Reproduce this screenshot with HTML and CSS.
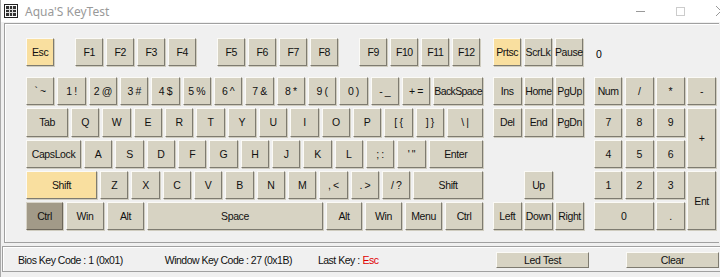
FILE: index.html
```html
<!DOCTYPE html>
<html lang="en">
<head>
    <title>Aqua'S KeyTest</title>
    <link rel="stylesheet" href="styles.css">
</head>
<body>
    <div class="window">
        <div class="titlebar">
            <svg class="app-icon" width="14" height="14" viewBox="0 0 14 14">
                <rect x="0.5" y="0.5" width="13" height="13" fill="#fff" stroke="#222"/>
                <rect x="2" y="2" width="10" height="10" fill="#333"/>
                <path d="M2 5.5h10M2 8.5h10M5.5 2v10M8.5 2v10" stroke="#ddd" stroke-width="1"/>
            </svg>
            <span class="title">Aqua'S KeyTest</span>
            <div class="controls">
                <span class="ctl-min"></span>
                <span class="ctl-max"></span>
                <svg class="ctl-close" width="10" height="10" viewBox="0 0 10 10">
                    <path d="M0 0L10 10M10 0L0 10" stroke="#999" stroke-width="1"/>
                </svg>
            </div>
        </div>

        <div class="panel">
            <div class="top-row">
                <div class="main-top">
                    <div class="key esc on">Esc</div>
                    <div class="fgroup">
                        <div class="key">F1</div>
                        <div class="key">F2</div>
                        <div class="key">F3</div>
                        <div class="key">F4</div>
                    </div>
                    <div class="fgroup">
                        <div class="key">F5</div>
                        <div class="key">F6</div>
                        <div class="key">F7</div>
                        <div class="key">F8</div>
                    </div>
                    <div class="fgroup">
                        <div class="key">F9</div>
                        <div class="key">F10</div>
                        <div class="key">F11</div>
                        <div class="key">F12</div>
                    </div>
                </div>
                <div class="nav-top">
                    <div class="key on">Prtsc</div>
                    <div class="key">ScrLk</div>
                    <div class="key">Pause</div>
                </div>
                <span class="led-code">0</span>
            </div>

            <div class="lower">
                <div class="main">
                    <div class="row">
                        <div class="key">` ~</div>
                        <div class="key">1 !</div>
                        <div class="key">2 @</div>
                        <div class="key">3 #</div>
                        <div class="key">4 $</div>
                        <div class="key">5 %</div>
                        <div class="key">6 ^</div>
                        <div class="key">7 &amp;</div>
                        <div class="key">8 *</div>
                        <div class="key">9 (</div>
                        <div class="key">0 )</div>
                        <div class="key">- _</div>
                        <div class="key">+ =</div>
                        <div class="key backspace">BackSpace</div>
                    </div>
                    <div class="row">
                        <div class="key tab">Tab</div>
                        <div class="key">Q</div>
                        <div class="key">W</div>
                        <div class="key">E</div>
                        <div class="key">R</div>
                        <div class="key">T</div>
                        <div class="key">Y</div>
                        <div class="key">U</div>
                        <div class="key">I</div>
                        <div class="key">O</div>
                        <div class="key">P</div>
                        <div class="key">[ {</div>
                        <div class="key">] }</div>
                        <div class="key backslash">\ |</div>
                    </div>
                    <div class="row">
                        <div class="key caps">CapsLock</div>
                        <div class="key">A</div>
                        <div class="key">S</div>
                        <div class="key">D</div>
                        <div class="key">F</div>
                        <div class="key">G</div>
                        <div class="key">H</div>
                        <div class="key">J</div>
                        <div class="key">K</div>
                        <div class="key">L</div>
                        <div class="key">; :</div>
                        <div class="key">' "</div>
                        <div class="key enter">Enter</div>
                    </div>
                    <div class="row">
                        <div class="key lshift on">Shift</div>
                        <div class="key">Z</div>
                        <div class="key">X</div>
                        <div class="key">C</div>
                        <div class="key">V</div>
                        <div class="key">B</div>
                        <div class="key">N</div>
                        <div class="key">M</div>
                        <div class="key">, &lt;</div>
                        <div class="key">. &gt;</div>
                        <div class="key">/ ?</div>
                        <div class="key rshift">Shift</div>
                    </div>
                    <div class="row">
                        <div class="key mod down">Ctrl</div>
                        <div class="key mod win">Win</div>
                        <div class="key mod">Alt</div>
                        <div class="key space">Space</div>
                        <div class="key mod ralt">Alt</div>
                        <div class="key mod">Win</div>
                        <div class="key mod">Menu</div>
                        <div class="key mod rctrl">Ctrl</div>
                    </div>
                </div>

                <div class="nav">
                    <div class="key">Ins</div>
                    <div class="key">Home</div>
                    <div class="key">PgUp</div>
                    <div class="key">Del</div>
                    <div class="key">End</div>
                    <div class="key">PgDn</div>
                    <div class="key up">Up</div>
                    <div class="key arrow-left">Left</div>
                    <div class="key arrow-down">Down</div>
                    <div class="key arrow-right">Right</div>
                </div>

                <div class="numpad">
                    <div class="key">Num</div>
                    <div class="key">/</div>
                    <div class="key">*</div>
                    <div class="key">-</div>
                    <div class="key">7</div>
                    <div class="key">8</div>
                    <div class="key">9</div>
                    <div class="key tall">+</div>
                    <div class="key">4</div>
                    <div class="key">5</div>
                    <div class="key">6</div>
                    <div class="key">1</div>
                    <div class="key">2</div>
                    <div class="key">3</div>
                    <div class="key tall">Ent</div>
                    <div class="key wide">0</div>
                    <div class="key">.</div>
                </div>
            </div>
        </div>

        <div class="status">
            <span class="bios">Bios Key Code : 1 (0x01)</span>
            <span class="wincode">Window Key Code : 27 (0x1B)</span>
            <span class="last">Last Key :</span>
            <span class="last-key">Esc</span>
            <button class="btn led">Led Test</button>
            <button class="btn clear">Clear</button>
        </div>
    </div>
</body>
</html>
```

FILE: styles.css
```css
body {
    margin: 0;
    background-color: #f0f0f0;
    font-family: "Liberation Sans", Arial, sans-serif;
    font-size: 10.5px;
    letter-spacing: -0.4px;
    color: #000;
}

.window {
    width: 720px;
    height: 277px;
    overflow: hidden;
    border-left: 1px solid #aaa;
    box-sizing: border-box;
}

.titlebar {
    height: 22px;
    background-color: #fff;
    display: flex;
    align-items: center;
    padding-left: 3px;
    letter-spacing: 0;
}

.app-icon {
    display: block;
}

.title {
    margin-left: 7px;
    font-family: "Noto Sans", sans-serif;
    font-size: 12px;
    color: #999;
}

.controls {
    margin-left: auto;
    display: flex;
    align-items: center;
}

.ctl-min {
    width: 9px;
    border-top: 1px solid #999;
    margin-right: 31px;
}

.ctl-max {
    width: 7px;
    height: 7px;
    border: 1px solid #ccc;
    margin-right: 31px;
}

.ctl-close {
    margin-right: -6px;
}

/* keyboard panel */
.panel {
    margin: 1px 1px 0 3px;
    border: 1px solid #a0a0a0;
    border-right: none;
    box-shadow: inset 1px 1px 0 #fff;
    padding: 14px 0 12px 21px;
}

.top-row {
    display: flex;
    align-items: center;
    height: 28.5px;
}

.main-top {
    display: flex;
    width: 457px;
}

.fgroup {
    display: flex;
    gap: 3px;
    margin-left: 21px;
}

.fgroup .key {
    width: 28px;
}

.esc {
    width: 29px;
}

.nav-top {
    display: flex;
    gap: 2.5px;
    margin-left: 10px;
}

.led-code {
    margin-left: 13px;
    margin-top: 3px;
}

.lower {
    display: flex;
    margin-top: 10.5px;
}

.main {
    width: 457px;
    display: flex;
    flex-direction: column;
    gap: 3px;
}

.row {
    display: flex;
    gap: 3px;
}

.key {
    box-sizing: border-box;
    width: 28.33px;
    height: 28.3px;
    flex-shrink: 0;
    background-color: #d7d3c3;
    border: 1px solid;
    border-color: #fbfaf6 #7e7b70 #7e7b70 #fbfaf6;
    box-shadow: 1px 1px 0 #cfccbf;
    display: flex;
    justify-content: center;
    align-items: center;
    white-space: pre;
    color: #111;
}

.key.on {
    background-color: #f9df9f;
}

.key.down {
    background-color: #a29a88;
    border-color: #d8d4c8 #6c665a #6c665a #d8d4c8;
}

.backspace {
    width: 49.7px;
    letter-spacing: -0.6px;
}

.tab {
    width: 42px;
}

.backslash {
    width: 36px;
}

.caps {
    width: 55px;
}

.enter {
    width: 54.3px;
}

.lshift {
    width: 71px;
}

.rshift {
    width: 69.7px;
}

.mod {
    width: 37px;
}

.win {
    width: 38px;
}

.space {
    width: 176px;
}

.ralt {
    width: 36px;
}

.rctrl {
    width: 38px;
}

.nav {
    margin-left: 10px;
    display: grid;
    grid-template-columns: repeat(3, 28.5px);
    grid-template-rows: repeat(5, 28.3px);
    gap: 3px 2.7px;
    align-content: start;
}

.nav .key,
.numpad .key {
    width: auto;
    height: auto;
}

.nav .up {
    grid-column: 2;
    grid-row: 4;
}

.nav .arrow-left {
    grid-column: 1;
    grid-row: 5;
}

.nav .arrow-down {
    grid-column: 2;
    grid-row: 5;
}

.nav .arrow-right {
    grid-column: 3;
    grid-row: 5;
}

.numpad {
    margin-left: 10px;
    display: grid;
    grid-template-columns: repeat(4, 28.5px);
    grid-template-rows: repeat(5, 28.3px);
    gap: 3px 2.67px;
}

.numpad .tall {
    grid-row: span 2;
}

.numpad .wide {
    grid-column: span 2;
}

/* status bar */
.status {
    margin: 3px 0 0 1px;
    height: 26px;
    box-sizing: border-box;
    border: 1px solid #a0a0a0;
    border-right: none;
    box-shadow: inset 1px 1px 0 #fff;
    display: flex;
    align-items: center;
    padding-top: 2px;
    letter-spacing: -0.5px;
    color: #111;
}

.bios {
    margin-left: 15px;
}

.wincode {
    margin-left: 42px;
}

.last {
    margin-left: 26px;
}

.last-key {
    margin-left: 3px;
    color: #e00000;
}

.btn {
    font-family: "Liberation Sans", Arial, sans-serif;
    font-size: 10.5px;
    letter-spacing: -0.3px;
    height: 16px;
    padding: 0;
    background-color: #d7d3c3;
    border: 1px solid;
    border-color: #fbfaf6 #7e7b70 #7e7b70 #fbfaf6;
    color: #111;
}

.led {
    width: 93px;
    margin-left: auto;
}

.clear {
    width: 93px;
    margin-left: 37px;
    margin-right: 1px;
}
```
